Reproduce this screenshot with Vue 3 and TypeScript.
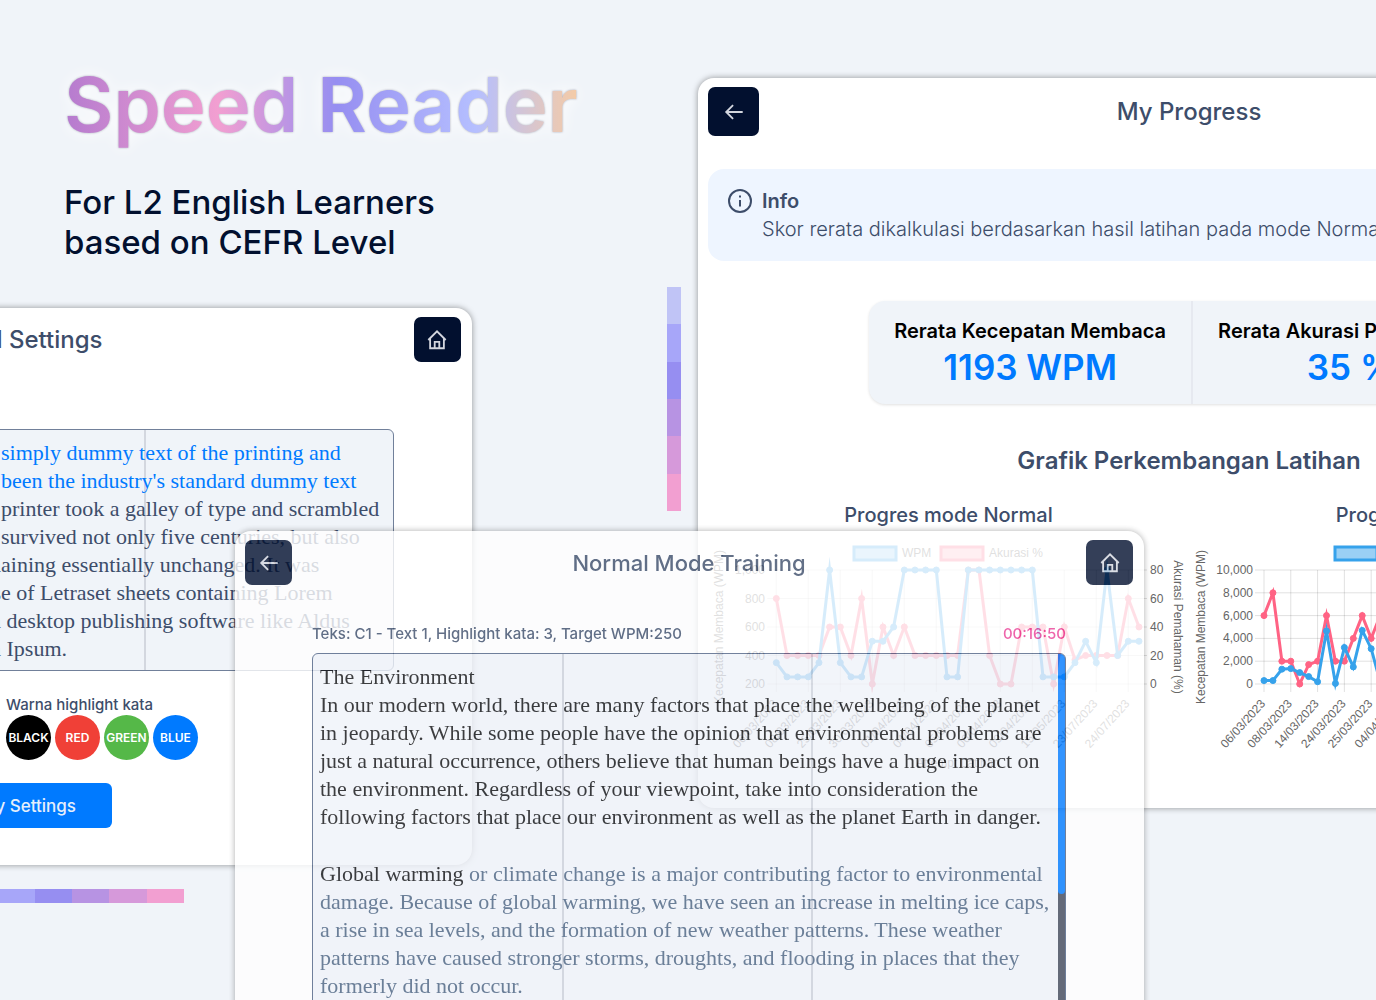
<script setup lang="ts">
interface ChartTick {
  y: number
  label: string
}

interface ChartSpec {
  caption: string
  start: number
  step: number
  left: number
  right: number
  leftLabelX: number
  leftTicks: string[]
  rightTicks: string[]
  max: number
  min: number
  wpm: number[]
  accuracy: number[]
  dates: string[]
  legendX: number
}

interface PreviewLine {
  lead: string
  rest: string
  marked: boolean
}

const TOP = 41
const BOTTOM = 155

const charts: ChartSpec[] = [
  {
    caption: 'Progres mode Normal',
    start: 68.3,
    step: 10.667,
    left: 11,
    right: 431,
    leftLabelX: 57,
    leftTicks: ['1,000', '800', '600', '400', '200'],
    rightTicks: ['80', '60', '40', '20', '0'],
    max: 1000,
    min: 200,
    wpm: [
      350, 250, 250, 250, 350, 1000, 350, 250, 250, 500, 500, 600, 1000, 1000, 1000, 1000, 250, 250,
      1000, 1000, 1000, 1000, 1000, 1000, 1000, 250, 250, 250, 350, 500, 350, 1000, 400, 500, 500,
    ],
    accuracy: [
      60, 20, 20, 20, 20, 40, 40, 20, 60, 0, 40, 20, 40, 20, 20, 20, 20, 20, 80, 80, 20, 0, 0, 40, 40,
      40, 0, 40, 17, 20, 20, 20, 20, 60, 40,
    ],
    dates: [
      '06/03/2023', '08/03/2023', '25/03/2023', '30/03/2023', '01/04/2023', '04/04/2023',
      '05/04/2023', '06/04/2023', '09/04/2023', '15/05/2023', '23/07/2023', '24/07/2023',
    ],
    legendX: 145,
  },
  {
    caption: 'Progres mode Acak',
    start: 75,
    step: 8.93,
    left: 12,
    right: 431,
    leftLabelX: 64,
    leftTicks: ['10,000', '8,000', '6,000', '4,000', '2,000', '0'],
    rightTicks: ['100', '80', '60', '40', '20', '0'],
    max: 10000,
    min: 0,
    wpm: [300, 300, 1300, 1350, 1000, 650, 200, 4650, 50, 3200, 1500, 4700, 3100, 200, 1000, 1200],
    accuracy: [60, 80, 20, 20, 0, 17, 20, 60, 20, 20, 40, 60, 40, 60, 40, 20],
    dates: ['06/03/2023', '08/03/2023', '14/03/2023', '24/03/2023', '25/03/2023', '04/04/2023'],
    legendX: 145,
  },
]

const xAt = (c: ChartSpec, i: number): number => c.start + c.step * i
const scale = (v: number, min: number, max: number): number =>
  TOP + ((max - v) / (max - min)) * (BOTTOM - TOP)
const wpmY = (c: ChartSpec, v: number): number => scale(v, c.min, c.max)
const accY = (c: ChartSpec, v: number): number => scale(v, 0, (c.rightTicks.length - 1) * 20)
const points = (c: ChartSpec, values: number[], y: (c: ChartSpec, v: number) => number): string =>
  values.map((v, i) => `${xAt(c, i).toFixed(1)},${y(c, v).toFixed(1)}`).join(' ')
const ticks = (labels: string[]): ChartTick[] =>
  labels.map((label, i) => ({ label, y: TOP + ((BOTTOM - TOP) * i) / (labels.length - 1) }))

const previewLines: PreviewLine[] = [
  { lead: 'Lorem Ipsum is ', rest: 'simply dummy text of the printing and', marked: true },
  { lead: 'typesetting industry. Lorem Ipsum has ', rest: 'been the industry\'s standard dummy text', marked: true },
  { lead: 'ever since the 1500s, when an unknown ', rest: 'printer took a galley of type and scrambled', marked: false },
  { lead: 'it to make a type specimen book. It has ', rest: 'survived not only five centuries, but also', marked: false },
  { lead: 'the leap into electronic typesetting, rem', rest: 'aining essentially unchanged. It was', marked: false },
  { lead: 'popularised in the 1960s with the releas', rest: 'e of Letraset sheets containing Lorem', marked: false },
  { lead: 'Ipsum passages, and more recently with', rest: ' desktop publishing software like Aldus', marked: false },
  { lead: 'PageMaker including versions of Lorem', rest: ' Ipsum.', marked: false },
]

const swatches = [
  { name: 'BLACK', color: '#000000' },
  { name: 'RED', color: '#f04037' },
  { name: 'GREEN', color: '#55b848' },
  { name: 'BLUE', color: '#007aff' },
]

const palette = ['#c0c4f6', '#a7a6f9', '#968ef1', '#b793e3', '#d699da', '#f29fd1']

const opening = [
  'The Environment',
  'In our modern world, there are many factors that place the wellbeing of the planet',
  'in jeopardy. While some people have the opinion that environmental problems are',
  'just a natural occurrence, others believe that human beings have a huge impact on',
  'the environment. Regardless of your viewpoint, take into consideration the',
  'following factors that place our environment as well as the planet Earth in danger.',
]

const upcoming = [
  'damage. Because of global warming, we have seen an increase in melting ice caps,',
  'a rise in sea levels, and the formation of new weather patterns. These weather',
  'patterns have caused stronger storms, droughts, and flooding in places that they',
  'formerly did not occur.',
]
</script>

<template>
  <main class="stage">
    <header class="hero">
      <h1>Speed Reader</h1>
      <p>For L2 English Learners<br />based on CEFR Level</p>
    </header>

    <div class="strip strip-vertical">
      <span v-for="c in palette" :key="c" :style="{ background: c }"></span>
    </div>
    <div class="strip strip-horizontal">
      <span v-for="c in palette" :key="c" :style="{ background: c }"></span>
    </div>

    <section class="window progress">
      <header class="bar">
        <button type="button" class="nav nav-large" aria-label="Back">
          <svg viewBox="0 0 24 24"><path d="M11 4.500 3.500 12l7.500 7.500M3.500 12h18" /></svg>
        </button>
        <h2>My Progress</h2>
        <span class="nav-large"></span>
      </header>

      <div class="info">
        <svg viewBox="0 0 24 24">
          <circle cx="12" cy="12" r="11" />
          <path d="M12 11v6.500M12 6.500v2" />
        </svg>
        <div>
          <strong>Info</strong>
          <p>Skor rerata dikalkulasi berdasarkan hasil latihan pada mode Normal</p>
        </div>
      </div>

      <dl class="stats">
        <div>
          <dt>Rerata Kecepatan Membaca</dt>
          <dd>1193 WPM</dd>
        </div>
        <div>
          <dt>Rerata Akurasi Pemahaman</dt>
          <dd>35 %</dd>
        </div>
      </dl>

      <h3>Grafik Perkembangan Latihan</h3>

      <div class="charts">
        <figure v-for="c in charts" :key="c.caption">
          <figcaption>{{ c.caption }}</figcaption>
          <svg viewBox="0 0 481 240" class="chart">
            <g class="grid">
              <line v-for="t in ticks(c.leftTicks)" :key="t.label" :x1="c.start - 9" :x2="c.right + 8" :y1="t.y" :y2="t.y" />
              <line v-for="(d, i) in c.dates" :key="d" :x1="xAt(c, i * 3)" :x2="xAt(c, i * 3)" :y1="TOP" :y2="BOTTOM + 8" />
            </g>
            <g class="accuracy">
              <polyline :points="points(c, c.accuracy, accY)" />
              <circle v-for="(v, i) in c.accuracy" :key="i" :cx="xAt(c, i)" :cy="accY(c, v)" r="3" />
              <rect :x="c.legendX + 88" y="18" width="42" height="13" />
            </g>
            <g class="wpm">
              <polyline :points="points(c, c.wpm, wpmY)" />
              <circle v-for="(v, i) in c.wpm" :key="i" :cx="xAt(c, i)" :cy="wpmY(c, v)" r="3" />
              <rect :x="c.legendX + 1" y="18" width="42" height="13" />
            </g>
            <text :x="c.legendX + 49" y="28">WPM</text>
            <text :x="c.legendX + 136" y="28">Akurasi %</text>
            <text v-for="t in ticks(c.leftTicks)" :key="t.label" :x="c.leftLabelX" :y="t.y + 4" text-anchor="end">{{ t.label }}</text>
            <text v-for="t in ticks(c.rightTicks)" :key="'r' + t.label" x="442" :y="t.y + 4">{{ t.label }}</text>
            <text
              v-for="(d, i) in c.dates"
              :key="'d' + d"
              text-anchor="end"
              :transform="`translate(${xAt(c, i * 3) + 2} 175) rotate(-48)`"
            >{{ d }}</text>
            <text text-anchor="middle" :transform="`translate(${c.left + 4} 98) rotate(-90)`">Kecepatan Membaca (WPM)</text>
            <text text-anchor="middle" transform="translate(466 98) rotate(90)">Akurasi Pemahaman (%)</text>
            <text x="250" y="238" text-anchor="middle">Attempt Latihan</text>
          </svg>
        </figure>
      </div>
    </section>

    <section class="window settings">
      <header class="bar">
        <span class="nav-small"></span>
        <h2>Saved Settings</h2>
        <button type="button" class="nav nav-small" aria-label="Home">
          <svg viewBox="0 0 24 24"><path d="M2.500 12 12 2.500 21.500 12M4.500 10.500v10.500h15V10.500M9.500 21v-7h5v7" /></svg>
        </button>
      </header>
      <div class="preview">
        <p v-for="line in previewLines" :key="line.rest" :class="{ marked: line.marked }">
          <span class="lead">{{ line.lead }}</span><span>{{ line.rest }}</span>
        </p>
      </div>
      <div class="colors">
        <h4>Warna highlight kata</h4>
        <div class="swatches">
          <button v-for="s in swatches" :key="s.name" type="button" :style="{ background: s.color }">{{ s.name }}</button>
        </div>
      </div>
      <button type="button" class="apply">Apply Settings</button>
    </section>

    <section class="window training">
      <header class="bar">
        <button type="button" class="nav nav-small" aria-label="Back">
          <svg viewBox="0 0 24 24"><path d="M11 4.500 3.500 12l7.500 7.500M3.500 12h18" /></svg>
        </button>
        <h2>Normal Mode Training</h2>
        <button type="button" class="nav nav-small" aria-label="Home">
          <svg viewBox="0 0 24 24"><path d="M2.500 12 12 2.500 21.500 12M4.500 10.500v10.500h15V10.500M9.500 21v-7h5v7" /></svg>
        </button>
      </header>
      <div class="meta">
        <span>Teks: C1 - Text 1, Highlight kata: 3, Target WPM:250</span>
        <time>00:16:50</time>
      </div>
      <div class="reader">
        <article>
          <p><span v-for="l in opening" :key="l">{{ l }}</span></p>
          <p class="upcoming">
            <span><b>Global warming</b> or climate change is a major contributing factor to environmental</span>
            <span v-for="l in upcoming" :key="l">{{ l }}</span>
          </p>
        </article>
        <div class="track"><div class="thumb"></div></div>
      </div>
    </section>
  </main>
</template>

<style>
body {
  margin: 0;
}
</style>

<style scoped>
.stage {
  position: relative;
  height: 100vh;
  overflow: hidden;
  background: #f0f4f9;
  color: #3d4d6a;
  font-family: Inter, "Liberation Sans", sans-serif;
}

h1, h2, h3, h4, p, dl, dd, figure {
  margin: 0;
}

button {
  border: 0;
  padding: 0;
  font-family: inherit;
  cursor: pointer;
}

.hero {
  padding: 56px 64px;
  color: #02102f;
}

.hero h1 {
  width: max-content;
  font-size: 76px;
  line-height: 96px;
  font-weight: 600;
  color: transparent;
  background: linear-gradient(90deg, #b57bcf 0%, #f29fd1 30%, #968ef1 53%, #b5bfff 80%, #f5cba6 100%);
  background-clip: text;
  filter: drop-shadow(0 0 1px rgba(60, 60, 90, 0.4)) drop-shadow(0 0 8px #ffffff);
}

.hero p {
  margin-top: 30px;
  font-size: 33px;
  line-height: 40px;
  font-weight: 500;
}

.strip {
  position: absolute;
  display: flex;
}

.strip span {
  flex: 1;
}

.strip-vertical {
  left: 667px;
  top: 287px;
  width: 14px;
  height: 224px;
  flex-direction: column;
}

.strip-horizontal {
  left: -40px;
  top: 889px;
  width: 224px;
  height: 14px;
}

.window {
  position: absolute;
  box-sizing: border-box;
  padding: 9px 11px 9px 10px;
  border-radius: 16px;
  background: #ffffff;
  box-shadow: 0 0 6px rgba(0, 0, 0, 0.4);
}

.progress {
  left: 698px;
  right: -305px;
  top: 78px;
  padding-bottom: 39px;
}

.settings {
  left: -437px;
  width: 909px;
  top: 308px;
  padding-bottom: 37px;
}

.training {
  left: 235px;
  right: 232px;
  top: 531px;
  opacity: 0.8;
}

.bar {
  display: flex;
  align-items: center;
  justify-content: space-between;
}

.bar h2 {
  font-size: 24px;
  line-height: 32px;
  font-weight: 500;
}

.training .bar h2 {
  font-size: 22px;
}

.nav {
  display: flex;
  align-items: center;
  justify-content: center;
  border-radius: 7px;
  background: #02102f;
}

.nav svg {
  width: 22px;
  height: 22px;
  fill: none;
  stroke: #d3d6de;
  stroke-width: 2;
}

.nav-large {
  width: 51px;
  height: 49px;
}

.nav-small {
  width: 47px;
  height: 45px;
}

.info {
  display: flex;
  gap: 10px;
  margin-top: 33px;
  padding: 18px 20px;
  border-radius: 16px;
  background: #eef5ff;
  font-size: 20px;
  line-height: 28px;
  white-space: nowrap;
}

.info svg {
  width: 24px;
  height: 24px;
  margin-top: 2px;
  fill: none;
  stroke: currentColor;
  stroke-width: 2;
}

.info strong {
  display: block;
  font-weight: 600;
}

.info p {
  font-weight: 300;
}

.stats {
  display: flex;
  width: max-content;
  margin: 40px auto 0;
  border-radius: 16px;
  background: #f0f4f9;
  box-shadow: 0 1px 3px rgba(0, 0, 0, 0.12);
  text-align: center;
}

.stats div {
  padding: 16px 25px 15px;
}

.stats div + div {
  border-left: 2px solid #e6e9f0;
}

.stats dt {
  font-size: 20px;
  line-height: 28px;
  font-weight: 600;
  color: #000000;
}

.stats dd {
  font-size: 35px;
  line-height: 44px;
  font-weight: 600;
  color: #007aff;
}

h3 {
  margin-top: 41px;
  font-size: 24px;
  line-height: 32px;
  font-weight: 600;
  text-align: center;
}

.charts {
  display: flex;
  margin-top: 24px;
}

.charts figure {
  flex: 1;
}

figcaption {
  font-size: 20px;
  line-height: 28px;
  font-weight: 500;
  text-align: center;
}

.chart {
  display: block;
  width: 100%;
  font-family: "Liberation Sans", Arial, sans-serif;
  font-size: 12px;
  fill: #666666;
}

.grid line {
  stroke: #000000;
  stroke-opacity: 0.12;
}

.accuracy {
  stroke: #ff6384;
  fill: #ff6384;
}

.wpm {
  stroke: #36a2eb;
  fill: #36a2eb;
}

.chart polyline {
  fill: none;
  stroke-width: 3;
  stroke-miterlimit: 10;
}

.chart rect {
  fill-opacity: 0.5;
  stroke-width: 3;
}

.preview {
  margin: 67px 67px 0;
  padding: 9px 0 7px;
  border: 1px solid #71809a;
  border-radius: 6px;
  background: linear-gradient(#d3d7df, #d3d7df) 67% 0 / 2px 100% no-repeat #f0f4f9;
}

.preview p {
  display: grid;
  grid-template-columns: 360px 1fr;
  font-family: "Liberation Serif", serif;
  font-size: 22px;
  line-height: 28px;
  white-space: pre;
}

.preview .lead {
  display: flex;
  justify-content: flex-end;
}

.preview .marked {
  color: #007aff;
}

.colors {
  margin-top: 23px;
  padding-left: 433px;
}

.colors h4 {
  font-size: 15px;
  line-height: 21px;
  font-weight: 500;
}

.swatches {
  display: flex;
  gap: 4px;
}

.swatches button {
  width: 45px;
  height: 45px;
  border-radius: 50%;
  color: #ffffff;
  font-size: 12px;
  font-weight: 600;
}

.apply {
  display: block;
  width: 190px;
  height: 45px;
  margin: 23px auto 0;
  border-radius: 6px;
  background: #007aff;
  color: #e6effb;
  font-size: 17px;
  font-weight: 500;
}

.meta {
  display: flex;
  justify-content: space-between;
  margin: 39px 67px 0;
  font-size: 15px;
  line-height: 20px;
  font-weight: 500;
}

.meta time {
  color: #eb3f97;
}

.reader {
  display: flex;
  margin: 9px 67px 0;
  overflow: hidden;
  border: 1px solid #4f6284;
  border-radius: 6px;
  background: #f0f3f9;
  color: #0c0d10;
}

.reader article {
  flex: 1;
  padding: 9px 0 24px 7px;
  background:
    linear-gradient(#ccd1db, #ccd1db) 33.500% 0 / 2px 100% no-repeat,
    linear-gradient(#ccd1db, #ccd1db) 67% 0 / 2px 100% no-repeat;
  font-family: "Liberation Serif", serif;
  font-size: 22px;
  line-height: 28px;
  white-space: nowrap;
}

.reader p span {
  display: block;
}

.reader b {
  font-weight: 400;
  color: #0c0d10;
}

.upcoming {
  margin-top: 29px;
  color: #4a6281;
}

.track {
  width: 7px;
  background: #42485a;
}

.thumb {
  height: 240px;
  border-radius: 0 0 4px 4px;
  background: #007aff;
}
</style>
